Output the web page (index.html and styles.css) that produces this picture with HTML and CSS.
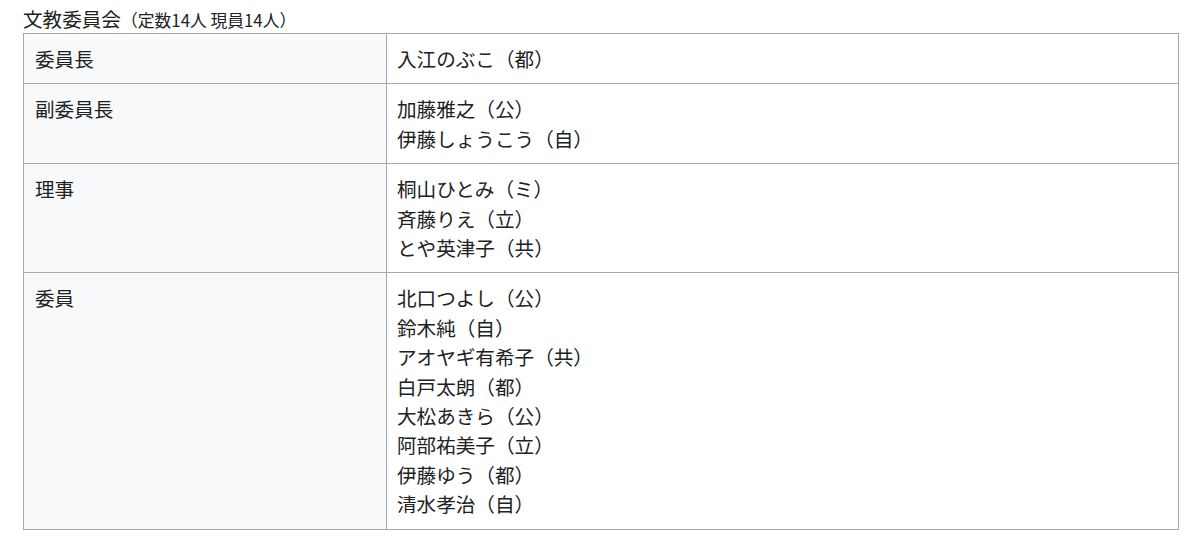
FILE: index.html
```html
<!DOCTYPE html>
<html lang="ja">
<head>
<meta charset="utf-8">
<link rel="stylesheet" href="styles.css">
</head>
<body>
<div class="page">
  <div class="title">文教委員会<span class="sub">（定数14人 現員14人）</span></div>
  <table class="members">
    <tr><th>委員長</th><td>入江のぶこ（都）</td></tr>
    <tr><th>副委員長</th><td>加藤雅之（公）<br>伊藤しょうこう（自）</td></tr>
    <tr><th>理事</th><td>桐山ひとみ（ミ）<br>斉藤りえ（立）<br>とや英津子（共）</td></tr>
    <tr><th>委員</th><td>北口つよし（公）<br>鈴木純（自）<br>アオヤギ有希子（共）<br>白戸太朗（都）<br>大松あきら（公）<br>阿部祐美子（立）<br>伊藤ゆう（都）<br>清水孝治（自）</td></tr>
  </table>
</div>
</body>
</html>
```
FILE: styles.css
```css
html, body {
  margin: 0;
  padding: 0;
  background: #ffffff;
}
body {
  font-family: "Noto Sans CJK JP", "Noto Sans", sans-serif;
  color: #202122;
}
.page {
  padding: 6px 22px 0 23px;
}
.title {
  font-size: 19.6px;
  line-height: 25px;
  height: 25px;
  margin-bottom: 2px;
}
.sub {
  font-size: 16.8px;
}
.members {
  width: 1156px;
  border-collapse: collapse;
  border: 1px solid #a2a9b1;
  font-size: 19.6px;
  line-height: 29.4px;
}
.members th,
.members td {
  border: 1px solid #a2a9b1;
  padding: 10px 10px;
  text-align: left;
  vertical-align: top;
  font-weight: normal;
}
.members th {
  width: 341px;
  background: #f8f9fa;
  padding-left: 11px;
}
.members td {
  background: #ffffff;
}
```
